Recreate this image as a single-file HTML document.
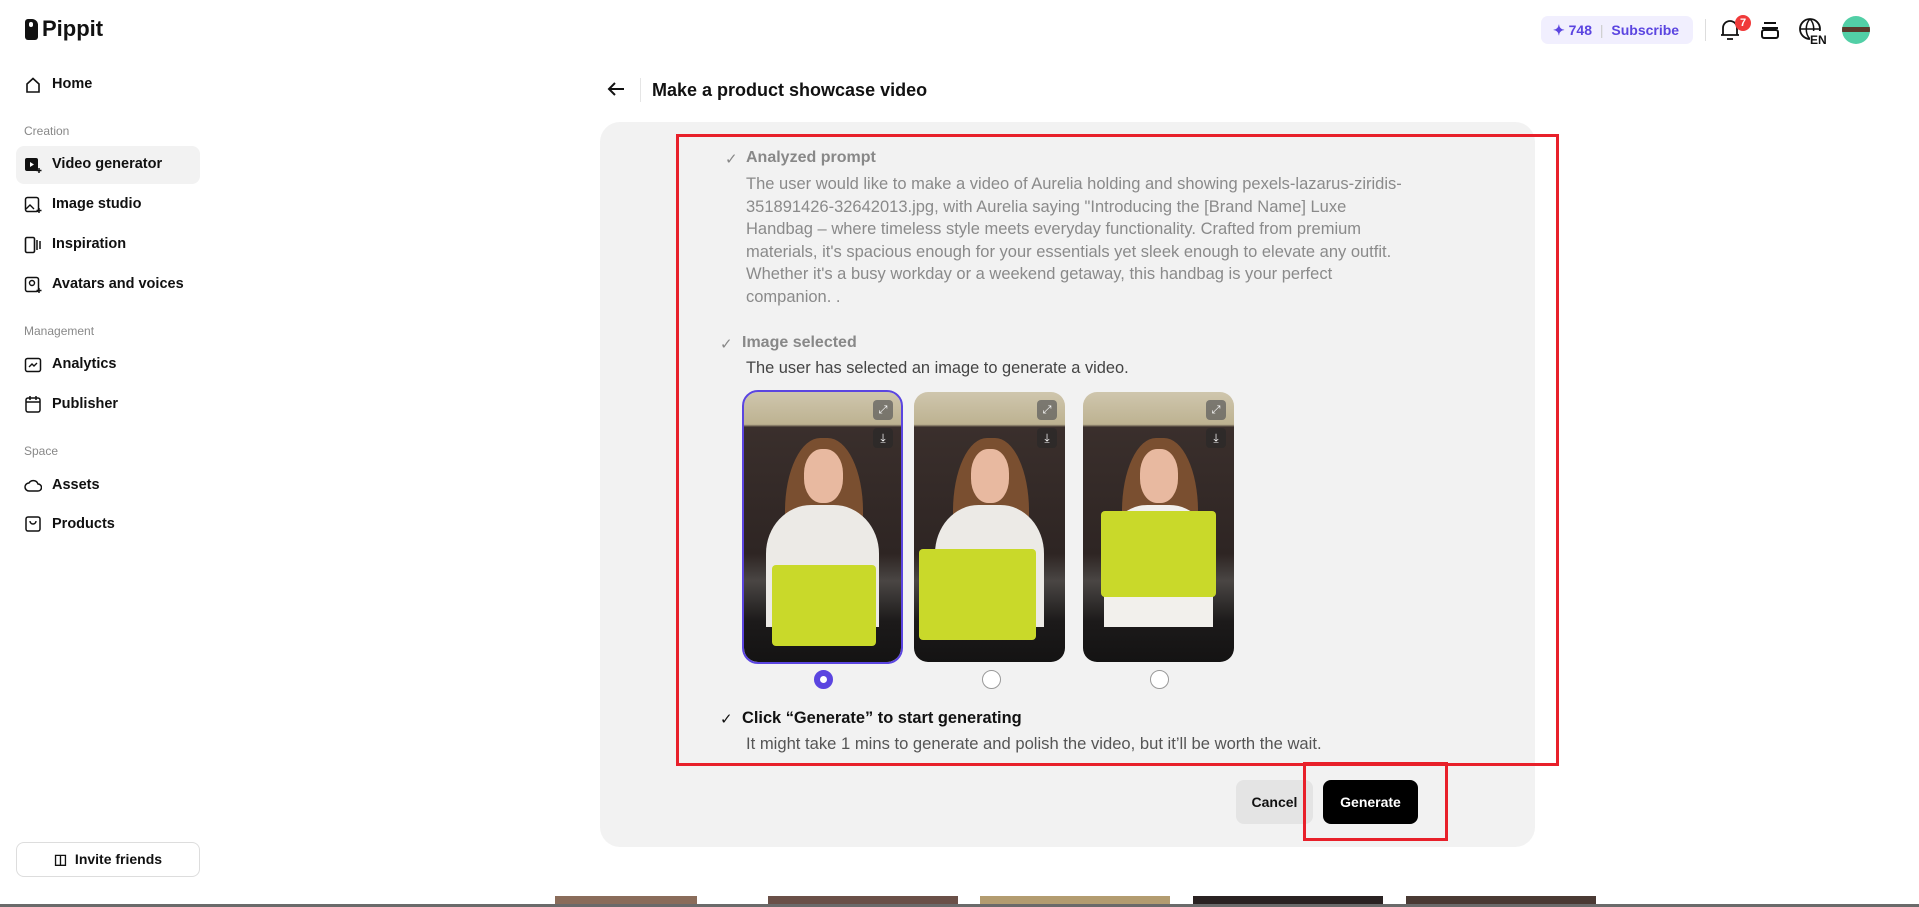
<!DOCTYPE html>
<html><head><meta charset="utf-8"><style>
*{box-sizing:border-box;margin:0;padding:0}
body{width:1919px;height:907px;overflow:hidden;background:#fff;font-family:"Liberation Sans",sans-serif;position:relative;color:#111}
.a{position:absolute}
.nav{position:absolute;left:52px;font-size:14.5px;font-weight:600;color:#111}
.sec{position:absolute;left:24px;font-size:12px;color:#888}
.ic{position:absolute;left:24px;width:18px;height:18px}
.p{font-size:16.5px;color:#8a8a8a;line-height:22.5px;white-space:nowrap}
.img{position:absolute;top:392px;height:270px;border-radius:14px;overflow:hidden;background:linear-gradient(#cfc6ad 0,#bdb291 12%,#3a2f2c 13%,#2e2523 60%,#4a4644 70%,#1c1a1a 85%,#141313 100%)}
.img .hair{position:absolute;left:26%;top:17%;width:50%;height:60%;background:#7a4f30;border-radius:45% 45% 10% 10%}
.img .body{position:absolute;left:14%;top:42%;width:72%;height:45%;background:#eceae6;border-radius:40% 40% 0 0}
.img .face{position:absolute;left:38%;top:21%;width:25%;height:20%;background:#e8b9a0;border-radius:45%}
.img .bag{position:absolute;background:#c9d92a;border-radius:4px}
.btn1{position:absolute;right:8px;top:8px;width:20px;height:20px;background:rgba(90,90,90,.7);border-radius:4px;color:#fff;font-size:11px;text-align:center;line-height:20px}
.btn2{position:absolute;right:8px;top:36px;width:20px;height:20px;background:rgba(40,40,40,.6);border-radius:4px;color:#fff;font-size:12px;text-align:center;line-height:20px}
.radio{position:absolute;top:670px;width:19px;height:19px;border-radius:50%;border:1px solid #999;background:#fff}
</style></head><body>
<div class="a" style="left:25px;top:19px;width:13px;height:21px;background:#111;border-radius:3px 6px 3px 3px"></div>
<div class="a" style="left:29px;top:22px;width:4px;height:5px;background:#fff;border-radius:2px"></div>
<div class="a" style="left:42px;top:16px;font-size:22px;font-weight:700">Pippit</div>

<svg class="ic" style="top:76px" viewBox="0 0 18 18"><path d="M3 8 9 2.5 15 8V16H3Z" fill="none" stroke="#111" stroke-width="1.6"/></svg>
<div class="nav" style="top:76px">Home</div>
<div class="sec" style="top:124px">Creation</div>
<div class="a" style="left:16px;top:146px;width:184px;height:38px;background:#f2f2f2;border-radius:8px"></div>
<svg class="ic" style="top:156px" viewBox="0 0 18 18"><rect x="1" y="2" width="13" height="13" rx="2" fill="#111"/><path d="M6 6l4 2.5L6 11z" fill="#fff"/><path d="M15 12v5M12.5 14.5h5" stroke="#111" stroke-width="1.5"/></svg>
<div class="nav" style="top:156px">Video generator</div>
<svg class="ic" style="top:196px" viewBox="0 0 18 18"><rect x="1.5" y="1.5" width="13" height="14" rx="2" fill="none" stroke="#111" stroke-width="1.5"/><path d="M2 13l4-4 4 4" fill="none" stroke="#111" stroke-width="1.4"/><path d="M15 12v5M12.5 14.5h5" stroke="#111" stroke-width="1.5"/></svg>
<div class="nav" style="top:196px">Image studio</div>
<svg class="ic" style="top:236px" viewBox="0 0 18 18"><rect x="1.5" y="1.5" width="9" height="15" rx="1.5" fill="none" stroke="#111" stroke-width="1.6"/><path d="M13 4v10M16 5v8" stroke="#111" stroke-width="1.5"/></svg>
<div class="nav" style="top:236px">Inspiration</div>
<svg class="ic" style="top:276px" viewBox="0 0 18 18"><rect x="1.5" y="1.5" width="13" height="14" rx="2" fill="none" stroke="#111" stroke-width="1.5"/><circle cx="8" cy="7" r="2.5" fill="none" stroke="#111" stroke-width="1.4"/><path d="M15 12v5M12.5 14.5h5" stroke="#111" stroke-width="1.5"/></svg>
<div class="nav" style="top:276px">Avatars and voices</div>
<div class="sec" style="top:324px">Management</div>
<svg class="ic" style="top:356px" viewBox="0 0 18 18"><rect x="1.5" y="2.5" width="15" height="13" rx="2" fill="none" stroke="#111" stroke-width="1.5"/><path d="M5 11l3-3 2 2 3-3" fill="none" stroke="#111" stroke-width="1.4"/></svg>
<div class="nav" style="top:356px">Analytics</div>
<svg class="ic" style="top:395px" viewBox="0 0 18 18"><rect x="2" y="3" width="14" height="14" rx="2" fill="none" stroke="#111" stroke-width="1.5"/><path d="M2 7h14M6 1v4M12 1v4" stroke="#111" stroke-width="1.5"/></svg>
<div class="nav" style="top:396px">Publisher</div>
<div class="sec" style="top:444px">Space</div>
<svg class="ic" style="top:476px" viewBox="0 0 18 18"><path d="M5 15a4 4 0 0 1 0-8 5 5 0 0 1 9 1 3.5 3.5 0 0 1 0 7z" fill="none" stroke="#111" stroke-width="1.5"/></svg>
<div class="nav" style="top:477px">Assets</div>
<svg class="ic" style="top:515px" viewBox="0 0 18 18"><rect x="2" y="2" width="14" height="14" rx="2" fill="none" stroke="#111" stroke-width="1.5"/><path d="M6 6a3 3 0 0 0 6 0" fill="none" stroke="#111" stroke-width="1.4"/></svg>
<div class="nav" style="top:516px">Products</div>

<div class="a" style="left:16px;top:842px;width:184px;height:35px;border:1px solid #ddd;border-radius:8px;font-size:14px;font-weight:600;text-align:center;line-height:33px">&#9707;&nbsp; Invite friends</div>

<div class="a" style="left:1541px;top:16px;width:152px;height:28px;background:#f1effe;border-radius:7px;color:#5b45e0;font-size:14px;font-weight:700;line-height:28px;padding-left:12px">✦ 748 <span style="color:#ccc;font-weight:400;margin:0 4px">|</span> Subscribe</div>
<div class="a" style="left:1705px;top:19px;width:1px;height:22px;background:#ddd"></div>
<svg class="a" style="left:1719px;top:18px" width="22" height="24" viewBox="0 0 22 24"><path d="M4 17V10a7 7 0 0 1 14 0v7zM2 17h18M8 21h6" fill="none" stroke="#111" stroke-width="1.8"/></svg>
<div class="a" style="left:1735px;top:15px;width:16px;height:16px;border-radius:50%;background:#f03a3a;color:#fff;font-size:11px;font-weight:700;text-align:center;line-height:16px">7</div>
<svg class="a" style="left:1760px;top:20px" width="20" height="20" viewBox="0 0 20 20"><path d="M4 3h12M2 8h16" stroke="#111" stroke-width="2"/><rect x="2" y="10" width="16" height="8" rx="2" fill="none" stroke="#111" stroke-width="2"/></svg>
<svg class="a" style="left:1798px;top:17px" width="32" height="28" viewBox="0 0 32 28"><circle cx="12" cy="12" r="10" fill="none" stroke="#111" stroke-width="1.8"/><path d="M2 12h20M12 2c-5 5-5 15 0 20M12 2c5 5 5 15 0 20" fill="none" stroke="#111" stroke-width="1.5"/><rect x="12" y="14" width="20" height="14" fill="#fff"/><text x="12" y="27" font-family="Liberation Sans" font-weight="700" font-size="12" fill="#111">EN</text></svg>
<div class="a" style="left:1842px;top:16px;width:28px;height:28px;border-radius:50%;background:#52cfa6;overflow:hidden"><div style="margin-top:11px;height:5px;background:#5a3a2c"></div></div>

<svg class="a" style="left:607px;top:81px" width="18" height="16" viewBox="0 0 18 16"><path d="M17 8H2M8 2 2 8l6 6" fill="none" stroke="#111" stroke-width="2"/></svg>
<div class="a" style="left:640px;top:78px;width:1px;height:24px;background:#e5e5e5"></div>
<div class="a" style="left:652px;top:80px;font-size:18px;font-weight:700">Make a product showcase video</div>

<div class="a" style="left:600px;top:122px;width:935px;height:725px;background:#f2f2f2;border-radius:20px"></div>

<div class="a" style="left:725px;top:150px;color:#888;font-size:15px">✓</div>
<div class="a" style="left:746px;top:149px;font-size:16px;font-weight:700;color:#888">Analyzed prompt</div>
<div class="a p" style="left:746px;top:173px">The user would like to make a video of Aurelia holding and showing pexels-lazarus-ziridis-<br>351891426-32642013.jpg, with Aurelia saying "Introducing the [Brand Name] Luxe<br>Handbag – where timeless style meets everyday functionality. Crafted from premium<br>materials, it's spacious enough for your essentials yet sleek enough to elevate any outfit.<br>Whether it's a busy workday or a weekend getaway, this handbag is your perfect<br>companion. .</div>

<div class="a" style="left:720px;top:335px;color:#888;font-size:15px">✓</div>
<div class="a" style="left:742px;top:334px;font-size:16px;font-weight:700;color:#888">Image selected</div>
<div class="a" style="left:746px;top:359px;font-size:16.4px;color:#444">The user has selected an image to generate a video.</div>

<div class="img" style="left:744px;width:157px;outline:2px solid #5b45e0"><div class="hair"></div><div class="body"></div><div class="face"></div><div class="bag" style="left:18%;top:64%;width:66%;height:30%"></div><div class="btn1">⤢</div><div class="btn2">⤓</div></div>
<div class="img" style="left:914px;width:151px"><div class="hair"></div><div class="body"></div><div class="face"></div><div class="bag" style="left:3%;top:58%;width:78%;height:34%"></div><div class="btn1">⤢</div><div class="btn2">⤓</div></div>
<div class="img" style="left:1083px;width:151px"><div class="hair"></div><div class="body" style="background:#f2f0ec"></div><div class="face"></div><div class="bag" style="left:12%;top:44%;width:76%;height:32%"></div><div class="btn1">⤢</div><div class="btn2">⤓</div></div>
<div class="radio" style="left:814px;border:6px solid #5b45e0"></div>
<div class="radio" style="left:982px"></div>
<div class="radio" style="left:1150px"></div>

<div class="a" style="left:720px;top:710px;font-size:15px">✓</div>
<div class="a" style="left:742px;top:709px;font-size:16.4px;font-weight:700">Click “Generate” to start generating</div>
<div class="a" style="left:746px;top:734px;font-size:16.6px;color:#555">It might take 1 mins to generate and polish the video, but it’ll be worth the wait.</div>

<div class="a" style="left:1236px;top:780px;width:77px;height:44px;background:#e4e4e4;border-radius:8px;font-size:14px;font-weight:700;text-align:center;line-height:44px">Cancel</div>
<div class="a" style="left:1323px;top:780px;width:95px;height:44px;background:#000;color:#fff;border-radius:8px;font-size:14px;font-weight:700;text-align:center;line-height:44px">Generate</div>

<div class="a" style="left:676px;top:134px;width:883px;height:632px;border:3px solid #e8202a"></div>
<div class="a" style="left:1303px;top:762px;width:145px;height:79px;border:3px solid #e8202a"></div>

<div class="a" style="left:555px;top:896px;width:142px;height:8px;background:#8a6c5a"></div>
<div class="a" style="left:768px;top:896px;width:190px;height:8px;background:#6a5048"></div>
<div class="a" style="left:980px;top:896px;width:190px;height:8px;background:#b39c70"></div>
<div class="a" style="left:1193px;top:896px;width:190px;height:8px;background:#2a2222"></div>
<div class="a" style="left:1406px;top:896px;width:190px;height:8px;background:#4a3a34"></div>
<div class="a" style="left:0;top:904px;width:1919px;height:3px;background:#6a6a6a"></div>
</body></html>
